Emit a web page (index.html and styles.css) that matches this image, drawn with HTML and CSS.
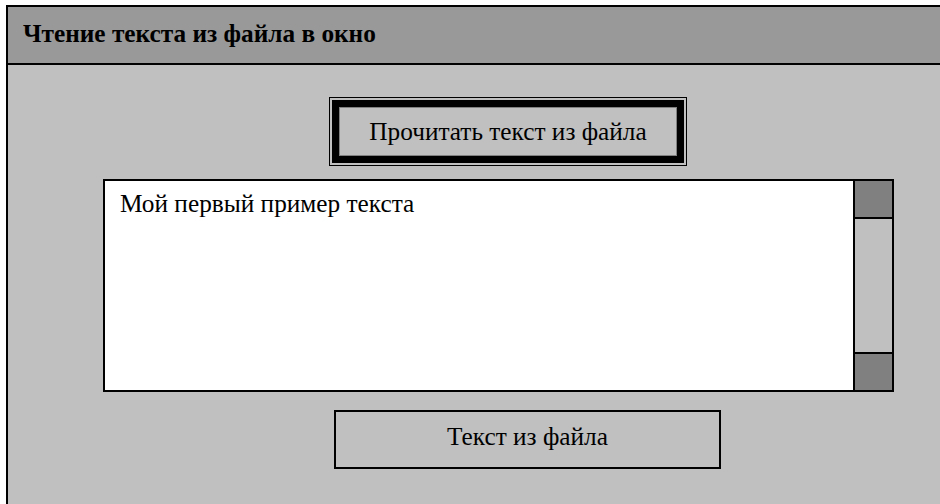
FILE: index.html
```html
<!DOCTYPE html>
<html lang="ru">
<head>
<meta charset="utf-8">
<title>Чтение текста из файла в окно</title>
<link rel="stylesheet" href="styles.css">
</head>
<body>
<div class="window">
  <div class="titlebar">
    <h1 class="title">Чтение текста из файла в окно</h1>
  </div>
  <div class="content">
    <div class="read-frame">
      <button class="read-btn" type="button">Прочитать текст из файла</button>
    </div>
    <div class="memo">
      <div class="memo-text">Мой первый пример текста</div>
      <div class="scrollbar">
        <div class="sb-btn sb-up"></div>
        <div class="sb-track"></div>
        <div class="sb-btn sb-down"></div>
      </div>
    </div>
    <div class="output">Текст из файла</div>
  </div>
</div>
</body>
</html>
```
FILE: styles.css
```css
html, body {
  margin: 0;
  height: 100%;
  overflow: hidden;
  background: #fff;
}

/* the window is cut off by the right and bottom edges of the view */
.window {
  margin: 5px 0 0 6px;
  height: calc(100% - 5px);
  box-sizing: border-box;
  border-top: 2px solid #000;
  border-left: 2px solid #000;
  display: flex;
  flex-direction: column;
  font-family: "Liberation Serif", "Times New Roman", serif;
  color: #000;
}

.titlebar {
  height: 56px;
  flex: none;
  border-bottom: 2px solid #000;
  background: #999;
  display: flex;
  align-items: center;
  padding-left: 15px;
}

.title {
  margin: 0 0 4px;
  font-size: 25.3px;
  font-weight: bold;
}

.content {
  flex: 1;
  background: #c0c0c0;
  display: flex;
  flex-direction: column;
  align-items: flex-start;
  padding-top: 32px;
}

/* double-framed default button */
.read-frame {
  margin-left: 321px;
  width: 358px;
  height: 69px;
  box-sizing: border-box;
  border: 1px solid #000;
  padding: 2px;
  display: flex;
}

.read-btn {
  flex: 1;
  margin: 0;
  padding: 0;
  border: 7px solid #000;
  background: #c0c0c0;
  box-shadow: inset 0 0 0 1px #808080;
  font: 25.3px "Liberation Serif", "Times New Roman", serif;
  color: #000;
}

/* multi-line text field with a vertical scrollbar */
.memo {
  margin: 13px 0 0 95px;
  width: 791px;
  height: 213px;
  box-sizing: border-box;
  border: 2px solid #000;
  background: #fff;
  display: flex;
}

.memo-text {
  flex: 1;
  padding: 8px 15px;
  font-size: 25.3px;
}

.scrollbar {
  width: 37px;
  border-left: 2px solid #000;
  background: #c0c0c0;
  display: flex;
  flex-direction: column;
}

.sb-btn {
  height: 36px;
  background: #808080;
}

.sb-up {
  border-bottom: 2px solid #000;
}

.sb-down {
  border-top: 2px solid #000;
}

.sb-track {
  flex: 1;
}

/* output label */
.output {
  margin: 18px 0 0 326px;
  width: 387px;
  height: 59px;
  box-sizing: border-box;
  border: 2px solid #000;
  padding-bottom: 7px;
  display: flex;
  align-items: center;
  justify-content: center;
  font-size: 25.3px;
}
```
